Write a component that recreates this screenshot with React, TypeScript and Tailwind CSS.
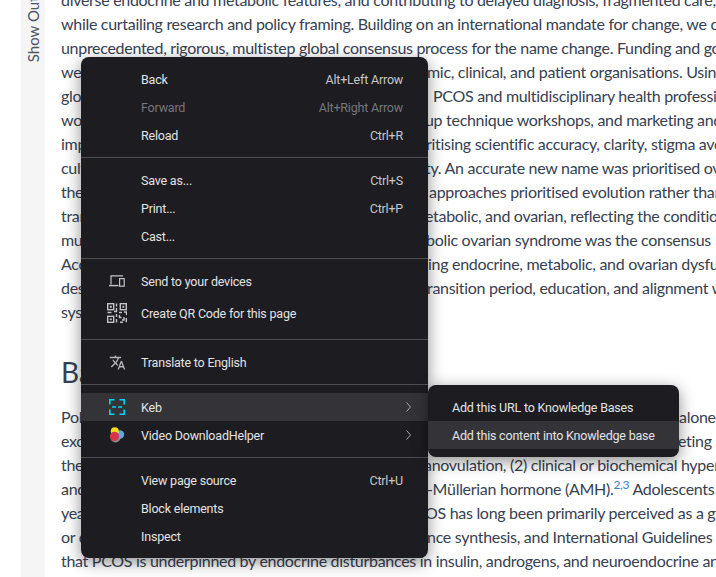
import React from "react";
import { MdTranslate } from "react-icons/md";

type Line = { left: string; right?: string; gap?: string };

const topLines: Line[] = [
  { left: "diverse endocrine and metabolic features, and contributing to delayed diagnosis, fragmented care," },
  { left: "while curtailing research and policy framing. Building on an international mandate for change, we co" },
  { left: "unprecedented, rigorous, multistep global consensus process for the name change. Funding and go" },
  { left: "were independent. We engaged leading acade", right: "mic, clinical, and patient organisations. Using", gap: "w-[366px]" },
  { left: "global surveys of people with", right: "PCOS and multidisciplinary health professionals", gap: "w-[372px]" },
  { left: "workshops, nominal gro", right: "up technique workshops, and marketing and", gap: "w-[364px]" },
  { left: "implemented a process prio", right: "ritising scientific accuracy, clarity, stigma avoidance", gap: "w-[365px]" },
  { left: "cultural and language suitabili", right: "ty. An accurate new name was prioritised over", gap: "w-[364px]" },
  { left: "the simplest option and most", right: "approaches prioritised evolution rather than", gap: "w-[368px]" },
  { left: "transformation, with endocrine, m", right: "etabolic, and ovarian, reflecting the condition", gap: "w-[364px]" },
  { left: "multisystem features. Polyendocrine meta", right: "bolic ovarian syndrome was the consensus", gap: "w-[365px]" },
  { left: "Accurately captures the interact", right: "ing endocrine, metabolic, and ovarian dysfunction", gap: "w-[367px]" },
  { left: "described. We now propose a t", right: "ransition period, education, and alignment with", gap: "w-[366px]" },
  { left: "systems." },
];

const bottomLines: Line[] = [
  { left: "Polycystic ovary syndrome affects about one in eight women and is not", right: "alone", gap: "w-[618px]" },
  { left: "excess androgens and irregular cycles are present, with someone me", right: "eting and", gap: "w-[617px]" },
  { left: "the diagnostic criteria include (1) ovulatory dysfunction or ", right: "anovulation, (2) clinical or biochemical hyperandrogenism", gap: "w-[363px]" },
  { left: "and (3) polycystic ovarian morphology or elevated an", right: "ti-Müllerian hormone (AMH).", gap: "w-[357px]" },
  { left: "years after menarche are assessed differently. PC", right: "OS has long been primarily perceived as a gynaecological", gap: "w-[364px]" },
  { left: "or cosmetic condition, yet evide", right: "nce synthesis, and International Guidelines", gap: "w-[366px]" },
  { left: "that PCOS is underpinned by endocrine disturbances in insulin, androgens, and neuroendocrine and" },
];

function TextLine({ line, sup }: { line: Line; sup?: boolean }) {
  return (
    <div className="flex h-6 whitespace-nowrap">
      {line.right ? (
        <>
          <span className={`${line.gap} shrink-0 overflow-hidden`}>{line.left}</span>
          <span>
            {line.right}
            {sup && (
              <>
                <sup className="text-[12px] text-[#3b82c4] leading-none">2,3</sup> Adolescents within 8
              </>
            )}
          </span>
        </>
      ) : (
        <span>{line.left}</span>
      )}
    </div>
  );
}

function MenuItem({ label, shortcut, icon, arrow, disabled, hover, tall }: {
  label: string;
  shortcut?: string;
  icon?: React.ReactNode;
  arrow?: boolean;
  disabled?: boolean;
  hover?: boolean;
  tall?: boolean;
}) {
  return (
    <div className={`flex items-center pr-[25px] ${tall ? "h-9" : "h-7"} ${hover ? "bg-[#333338]" : ""} ${disabled ? "text-[#77777b]" : "text-[#e3e3e3]"}`}>
      <span className="w-[60px] shrink-0 flex justify-center pl-[30px] pr-[18px]">{icon}</span>
      <span className="flex-1 pt-[2px]">{label}</span>
      {shortcut && <span className={`pt-[2px] ${disabled ? "text-[#77777b]" : "text-[#c7c7c7]"}`}>{shortcut}</span>}
      {arrow && (
        <svg width="7" height="10" viewBox="0 0 7 10" fill="none" stroke="#a8a8ac" strokeWidth="1" className="mr-[-9px]">
          <path d="M1.5 0.5 L5.5 5 L1.5 9.5" />
        </svg>
      )}
    </div>
  );
}

function Separator() {
  return <div className="h-px my-2 bg-[#4d4d52]" />;
}

function DevicesIcon() {
  return (
    <svg width="16" height="12" viewBox="0 0 16 12" fill="none" stroke="#c4c4c6" strokeWidth="1.2" className="shrink-0">
      <path d="M2 9.5 V0.8 H14" />
      <path d="M0 10.6 H9.5" strokeWidth="1.4" />
      <rect x="10.6" y="3.6" width="4.6" height="7.6" />
    </svg>
  );
}

function QrIcon() {
  return (
    <svg width="20" height="20" viewBox="0 0 20 20" fill="none" stroke="#c4c4c6" strokeWidth="1.4" className="shrink-0">
      <rect x="0.7" y="0.7" width="6" height="6" />
      <rect x="13.3" y="0.7" width="6" height="6" />
      <rect x="0.7" y="13.3" width="6" height="6" />
      <path d="M3 3h1.5v1.5H3zM15.7 3h1.3v1.5h-1.3zM3 15.7h1.5V17H3z" fill="#c4c4c6" strokeWidth="0.5" />
      <path d="M9.5 0.5v3M9.5 5v3.5H7M0.5 9.5h4M12 9.5h3M17 9h2.5v3M9.5 11v3M9.5 16v3.5M12.5 12v2.5h2M13 19.3h3M19.3 15v4.3M17 14v3h-2" />
    </svg>
  );
}

function KebIcon() {
  return (
    <svg width="16" height="16" viewBox="0 0 16 16" fill="none" stroke="#00d5f5" strokeWidth="1.6" className="shrink-0">
      <path d="M5.5 0.8H0.8V5.5M10.5 0.8H15.2V5.5M5.5 15.2H0.8V10.5M10.5 15.2H15.2V10.5M3 8H7M9 8H13" />
    </svg>
  );
}

function VdhIcon() {
  return (
    <svg width="16" height="16" viewBox="0 0 16 16" className="shrink-0">
      <circle cx="6.5" cy="10.5" r="5" fill="#8b8b90" />
      <circle cx="11" cy="7.5" r="4.2" fill="#5ea7e0" />
      <circle cx="5.8" cy="4.2" r="4" fill="#f5dc1e" />
      <circle cx="5.5" cy="9.3" r="4.6" fill="#d8344a" />
    </svg>
  );
}

export default function App() {
  return (
    <div className="relative flex h-[577px] w-[716px] overflow-hidden bg-white font-['Lato','Noto_Sans',sans-serif]">
      <div className="ml-[21px] w-6 shrink-0 bg-[#f5f5f5] overflow-hidden flex justify-center items-start">
        <span className="mt-[-27px] rotate-180 [writing-mode:vertical-rl] whitespace-nowrap text-[15px] leading-6 text-[#4b5563]">Show Outline</span>
      </div>

      <main className="ml-4 flex-1 min-w-0 mt-[-12px] text-[16px] tracking-[-0.3px] leading-6 text-[#374151]">
        {topLines.map((line, i) => (
          <TextLine key={i} line={line} />
        ))}
        <h2 className="mt-[30px] mb-[15px] h-[36px] text-[28px] tracking-normal leading-9 text-[#374151]">Background</h2>
        {bottomLines.map((line, i) => (
          <TextLine key={i} line={line} sup={i === 3} />
        ))}
        <div className="h-6 whitespace-nowrap">
          dysregulation.<sup className="text-[12px] text-[#3b82c4] leading-none">4,5</sup>
        </div>
      </main>

      {/* context menu */}
      <div className="absolute left-[81px] top-[57px] w-[347px] rounded-lg bg-[#1c1c21] py-2 text-[12.5px] tracking-[-0.2px] leading-5 font-['Roboto',sans-serif] shadow-[0_4px_16px_rgba(0,0,0,0.45)]">
        <MenuItem label="Back" shortcut="Alt+Left Arrow" />
        <MenuItem label="Forward" shortcut="Alt+Right Arrow" disabled />
        <MenuItem label="Reload" shortcut="Ctrl+R" />
        <Separator />
        <MenuItem label="Save as..." shortcut="Ctrl+S" />
        <MenuItem label="Print..." shortcut="Ctrl+P" />
        <MenuItem label="Cast..." />
        <Separator />
        <MenuItem label="Send to your devices" icon={<DevicesIcon />} />
        <MenuItem label="Create QR Code for this page" icon={<QrIcon />} tall />
        <Separator />
        <MenuItem label="Translate to English" icon={<MdTranslate size={17} className="text-[#b4b4b6] shrink-0" />} />
        <Separator />
        <MenuItem label="Keb" icon={<KebIcon />} arrow hover />
        <MenuItem label="Video DownloadHelper" icon={<VdhIcon />} arrow />
        <Separator />
        <MenuItem label="View page source" shortcut="Ctrl+U" />
        <MenuItem label="Block elements" />
        <MenuItem label="Inspect" />
      </div>

      {/* submenu */}
      <div className="absolute left-[428px] top-[385px] w-[251px] rounded-lg bg-[#1c1c21] py-2 text-[12.5px] tracking-[-0.2px] leading-5 font-['Roboto',sans-serif] text-[#e3e3e3] whitespace-nowrap shadow-[0_4px_16px_rgba(0,0,0,0.45)]">
        <div className="h-7 pl-6 pt-[5px]">Add this URL to Knowledge Bases</div>
        <div className="h-7 pl-6 pt-[5px] bg-[#333338]">Add this content into Knowledge base</div>
      </div>
    </div>
  );
}
